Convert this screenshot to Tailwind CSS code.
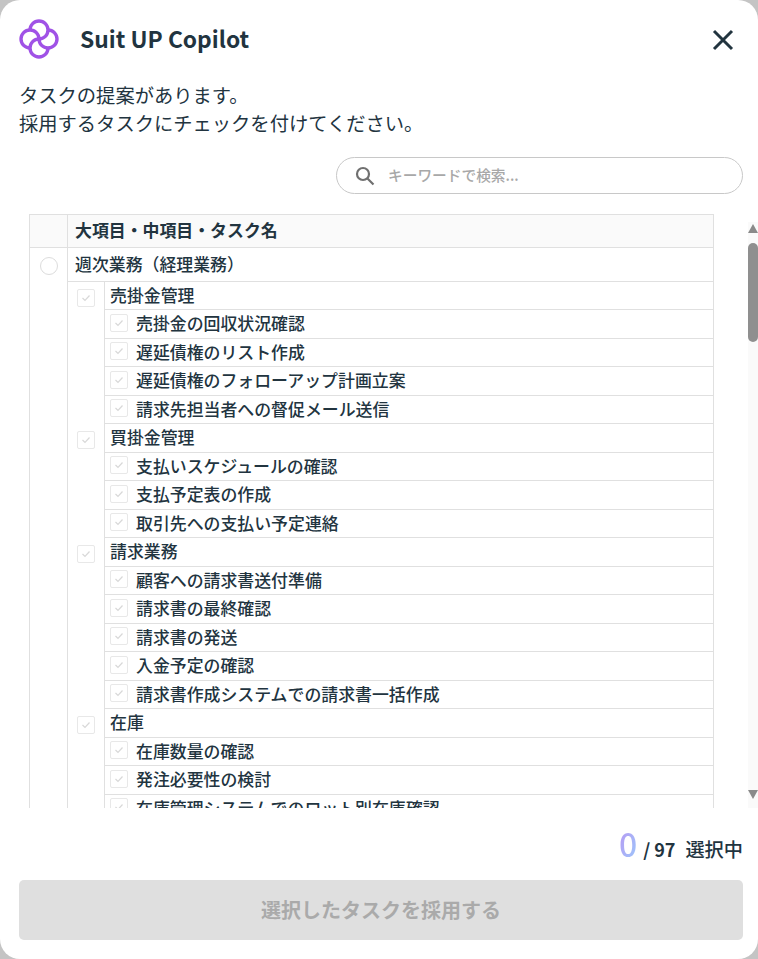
<!DOCTYPE html>
<html lang="ja"><head><meta charset="utf-8">
<script src="https://cdn.jsdelivr.net/npm/@tailwindcss/browser@4"></script>
</head>
<body class="bg-[#c4c4c4] overflow-hidden">
<div class="w-[758px] h-[959px] bg-white rounded-[20px] overflow-hidden flex flex-col pl-[19px] pr-[15px] text-[#22343f] font-['Noto_Sans_CJK_JP','Noto_Sans',sans-serif]">
  <header class="h-[78px] shrink-0 flex items-center justify-between">
    <div class="flex items-center gap-[21px]">
      <svg width="40" height="40" viewBox="0 0 40 40" fill="none" stroke="#a052e6" stroke-width="3.4">
        <path d="M11 11 A9 9 0 1 1 20 20"/>
        <path d="M29 11 A9 9 0 1 1 20 20"/>
        <path d="M29 29 A9 9 0 1 1 20 20"/>
        <path d="M11 29 A9 9 0 1 1 20 20"/>
      </svg>
      <h1 class="text-[22.8px] font-bold">Suit UP Copilot</h1>
    </div>
    <svg class="mr-[9px] mt-[1px]" width="22" height="22" viewBox="0 0 22 22" fill="none" stroke="#22343f" stroke-width="3"><path d="M2 2 L20 20 M20 2 L2 20"/></svg>
  </header>
  <p class="text-[19.3px] leading-[28px] h-[56px] mt-[3px] shrink-0">タスクの提案があります。<br>採用するタスクにチェックを付けてください。</p>
  <div class="flex justify-end mt-[20px] shrink-0">
    <div class="w-[407px] h-[37px] border border-[#c8c8c8] rounded-full flex items-center pl-[18px] gap-[13px]">
      <svg width="20" height="20" viewBox="0 0 20 20" fill="none" stroke="#707070" stroke-width="2.2"><circle cx="8" cy="8" r="6"/><path d="M12.5 12.5 L18.5 18.5"/></svg>
      <span class="text-[14.7px] font-medium text-[#a8a8a8]">キーワードで検索...</span>
    </div>
  </div>
  <div class="mt-[20px] h-[594px] shrink-0 flex -mr-[15px] overflow-hidden">
    <div class="ml-[10px] w-[685px] shrink-0 border-x border-t border-[#e0e0e0] text-[16.9px] font-medium self-start">
      <div class="flex h-[33px] bg-[#fafafa] border-b border-[#e0e0e0]">
        <div class="w-[38px] border-r border-[#e0e0e0]"></div>
        <div class="flex items-center pl-[7px] pb-[2px] font-bold">大項目・中項目・タスク名</div>
      </div>
      <div class="flex">
        <div class="w-[38px] shrink-0 border-r border-[#e0e0e0] pt-[9px] flex justify-center">
          <span class="block w-[18px] h-[18px] rounded-full border border-[#dcdcdc]"></span>
        </div>
        <div class="flex-1 min-w-0">
          <div class="h-[34px] flex items-center pl-[7px] pb-[2px] border-b border-[#e0e0e0]">週次業務（経理業務）</div>
          <!-- 売掛金管理 -->
          <div class="flex">
            <div class="w-[37px] shrink-0 border-r border-[#e0e0e0] pt-[7px] pr-[1px] flex justify-center"><span class="flex items-center justify-center w-[18px] h-[18px] rounded-[2px] border border-[#e8e8e8]"><svg width="12" height="12" viewBox="0 0 12 12" fill="none" stroke="#d8d8d8" stroke-width="1.2"><path d="M2.5 6 L5 8.5 L9.5 3.5"/></svg></span></div>
            <div class="flex-1 min-w-0">
              <div class="h-[28px] flex items-center pl-[5px] pb-[2px] border-b border-[#e0e0e0]">売掛金管理</div>
              <div class="h-[28.5px] flex items-center pl-[5px] pb-[2px] gap-[8px] border-b border-[#e0e0e0]"><span class="flex items-center justify-center w-[18px] h-[18px] rounded-[2px] border border-[#e8e8e8]"><svg width="12" height="12" viewBox="0 0 12 12" fill="none" stroke="#d8d8d8" stroke-width="1.2"><path d="M2.5 6 L5 8.5 L9.5 3.5"/></svg></span>売掛金の回収状況確認</div>
              <div class="h-[28.5px] flex items-center pl-[5px] pb-[2px] gap-[8px] border-b border-[#e0e0e0]"><span class="flex items-center justify-center w-[18px] h-[18px] rounded-[2px] border border-[#e8e8e8]"><svg width="12" height="12" viewBox="0 0 12 12" fill="none" stroke="#d8d8d8" stroke-width="1.2"><path d="M2.5 6 L5 8.5 L9.5 3.5"/></svg></span>遅延債権のリスト作成</div>
              <div class="h-[28.5px] flex items-center pl-[5px] pb-[2px] gap-[8px] border-b border-[#e0e0e0]"><span class="flex items-center justify-center w-[18px] h-[18px] rounded-[2px] border border-[#e8e8e8]"><svg width="12" height="12" viewBox="0 0 12 12" fill="none" stroke="#d8d8d8" stroke-width="1.2"><path d="M2.5 6 L5 8.5 L9.5 3.5"/></svg></span>遅延債権のフォローアップ計画立案</div>
              <div class="h-[28.5px] flex items-center pl-[5px] pb-[2px] gap-[8px] border-b border-[#e0e0e0]"><span class="flex items-center justify-center w-[18px] h-[18px] rounded-[2px] border border-[#e8e8e8]"><svg width="12" height="12" viewBox="0 0 12 12" fill="none" stroke="#d8d8d8" stroke-width="1.2"><path d="M2.5 6 L5 8.5 L9.5 3.5"/></svg></span>請求先担当者への督促メール送信</div>
            </div>
          </div>
          <!-- 買掛金管理 -->
          <div class="flex">
            <div class="w-[37px] shrink-0 border-r border-[#e0e0e0] pt-[7px] pr-[1px] flex justify-center"><span class="flex items-center justify-center w-[18px] h-[18px] rounded-[2px] border border-[#e8e8e8]"><svg width="12" height="12" viewBox="0 0 12 12" fill="none" stroke="#d8d8d8" stroke-width="1.2"><path d="M2.5 6 L5 8.5 L9.5 3.5"/></svg></span></div>
            <div class="flex-1 min-w-0">
              <div class="h-[28.5px] flex items-center pl-[5px] pb-[2px] border-b border-[#e0e0e0]">買掛金管理</div>
              <div class="h-[28.5px] flex items-center pl-[5px] pb-[2px] gap-[8px] border-b border-[#e0e0e0]"><span class="flex items-center justify-center w-[18px] h-[18px] rounded-[2px] border border-[#e8e8e8]"><svg width="12" height="12" viewBox="0 0 12 12" fill="none" stroke="#d8d8d8" stroke-width="1.2"><path d="M2.5 6 L5 8.5 L9.5 3.5"/></svg></span>支払いスケジュールの確認</div>
              <div class="h-[28.5px] flex items-center pl-[5px] pb-[2px] gap-[8px] border-b border-[#e0e0e0]"><span class="flex items-center justify-center w-[18px] h-[18px] rounded-[2px] border border-[#e8e8e8]"><svg width="12" height="12" viewBox="0 0 12 12" fill="none" stroke="#d8d8d8" stroke-width="1.2"><path d="M2.5 6 L5 8.5 L9.5 3.5"/></svg></span>支払予定表の作成</div>
              <div class="h-[28.5px] flex items-center pl-[5px] pb-[2px] gap-[8px] border-b border-[#e0e0e0]"><span class="flex items-center justify-center w-[18px] h-[18px] rounded-[2px] border border-[#e8e8e8]"><svg width="12" height="12" viewBox="0 0 12 12" fill="none" stroke="#d8d8d8" stroke-width="1.2"><path d="M2.5 6 L5 8.5 L9.5 3.5"/></svg></span>取引先への支払い予定連絡</div>
            </div>
          </div>
          <!-- 請求業務 -->
          <div class="flex">
            <div class="w-[37px] shrink-0 border-r border-[#e0e0e0] pt-[7px] pr-[1px] flex justify-center"><span class="flex items-center justify-center w-[18px] h-[18px] rounded-[2px] border border-[#e8e8e8]"><svg width="12" height="12" viewBox="0 0 12 12" fill="none" stroke="#d8d8d8" stroke-width="1.2"><path d="M2.5 6 L5 8.5 L9.5 3.5"/></svg></span></div>
            <div class="flex-1 min-w-0">
              <div class="h-[28.5px] flex items-center pl-[5px] pb-[2px] border-b border-[#e0e0e0]">請求業務</div>
              <div class="h-[28.5px] flex items-center pl-[5px] pb-[2px] gap-[8px] border-b border-[#e0e0e0]"><span class="flex items-center justify-center w-[18px] h-[18px] rounded-[2px] border border-[#e8e8e8]"><svg width="12" height="12" viewBox="0 0 12 12" fill="none" stroke="#d8d8d8" stroke-width="1.2"><path d="M2.5 6 L5 8.5 L9.5 3.5"/></svg></span>顧客への請求書送付準備</div>
              <div class="h-[28.5px] flex items-center pl-[5px] pb-[2px] gap-[8px] border-b border-[#e0e0e0]"><span class="flex items-center justify-center w-[18px] h-[18px] rounded-[2px] border border-[#e8e8e8]"><svg width="12" height="12" viewBox="0 0 12 12" fill="none" stroke="#d8d8d8" stroke-width="1.2"><path d="M2.5 6 L5 8.5 L9.5 3.5"/></svg></span>請求書の最終確認</div>
              <div class="h-[28.5px] flex items-center pl-[5px] pb-[2px] gap-[8px] border-b border-[#e0e0e0]"><span class="flex items-center justify-center w-[18px] h-[18px] rounded-[2px] border border-[#e8e8e8]"><svg width="12" height="12" viewBox="0 0 12 12" fill="none" stroke="#d8d8d8" stroke-width="1.2"><path d="M2.5 6 L5 8.5 L9.5 3.5"/></svg></span>請求書の発送</div>
              <div class="h-[28.5px] flex items-center pl-[5px] pb-[2px] gap-[8px] border-b border-[#e0e0e0]"><span class="flex items-center justify-center w-[18px] h-[18px] rounded-[2px] border border-[#e8e8e8]"><svg width="12" height="12" viewBox="0 0 12 12" fill="none" stroke="#d8d8d8" stroke-width="1.2"><path d="M2.5 6 L5 8.5 L9.5 3.5"/></svg></span>入金予定の確認</div>
              <div class="h-[28.5px] flex items-center pl-[5px] pb-[2px] gap-[8px] border-b border-[#e0e0e0]"><span class="flex items-center justify-center w-[18px] h-[18px] rounded-[2px] border border-[#e8e8e8]"><svg width="12" height="12" viewBox="0 0 12 12" fill="none" stroke="#d8d8d8" stroke-width="1.2"><path d="M2.5 6 L5 8.5 L9.5 3.5"/></svg></span>請求書作成システムでの請求書一括作成</div>
            </div>
          </div>
          <!-- 在庫 -->
          <div class="flex">
            <div class="w-[37px] shrink-0 border-r border-[#e0e0e0] pt-[7px] pr-[1px] flex justify-center"><span class="flex items-center justify-center w-[18px] h-[18px] rounded-[2px] border border-[#e8e8e8]"><svg width="12" height="12" viewBox="0 0 12 12" fill="none" stroke="#d8d8d8" stroke-width="1.2"><path d="M2.5 6 L5 8.5 L9.5 3.5"/></svg></span></div>
            <div class="flex-1 min-w-0">
              <div class="h-[28.5px] flex items-center pl-[5px] pb-[2px] border-b border-[#e0e0e0]">在庫</div>
              <div class="h-[28.5px] flex items-center pl-[5px] pb-[2px] gap-[8px] border-b border-[#e0e0e0]"><span class="flex items-center justify-center w-[18px] h-[18px] rounded-[2px] border border-[#e8e8e8]"><svg width="12" height="12" viewBox="0 0 12 12" fill="none" stroke="#d8d8d8" stroke-width="1.2"><path d="M2.5 6 L5 8.5 L9.5 3.5"/></svg></span>在庫数量の確認</div>
              <div class="h-[28.5px] flex items-center pl-[5px] pb-[2px] gap-[8px] border-b border-[#e0e0e0]"><span class="flex items-center justify-center w-[18px] h-[18px] rounded-[2px] border border-[#e8e8e8]"><svg width="12" height="12" viewBox="0 0 12 12" fill="none" stroke="#d8d8d8" stroke-width="1.2"><path d="M2.5 6 L5 8.5 L9.5 3.5"/></svg></span>発注必要性の検討</div>
              <div class="h-[28.5px] flex items-center pl-[5px] pb-[2px] gap-[8px] border-b border-[#e0e0e0]"><span class="flex items-center justify-center w-[18px] h-[18px] rounded-[2px] border border-[#e8e8e8]"><svg width="12" height="12" viewBox="0 0 12 12" fill="none" stroke="#d8d8d8" stroke-width="1.2"><path d="M2.5 6 L5 8.5 L9.5 3.5"/></svg></span>在庫管理システムでのロット別在庫確認</div>
            </div>
          </div>
        </div>
      </div>
    </div>
    <div class="ml-auto mt-[8px] w-[10px] bg-[#fafafa] flex flex-col">
      <svg class="mt-[2px]" width="10" height="9" viewBox="0 0 10 9"><path d="M0 9 L5 0 L10 9Z" fill="#8a8a8a"/></svg>
      <div class="mt-[10px] w-[10px] h-[99px] bg-[#8f8f8f] rounded-[5px]"></div>
      <svg class="mt-auto mb-[9px]" width="10" height="9" viewBox="0 0 10 9"><path d="M0 0 L5 9 L10 0Z" fill="#8a8a8a"/></svg>
    </div>
  </div>
  <div class="h-[72px] shrink-0 flex items-end justify-end pb-[18px] font-medium">
    <span class="text-[32px] leading-[38px] bg-gradient-to-br from-[#b894f2] to-[#98c8fb] bg-clip-text text-transparent">0</span>
    <span class="text-[18px] leading-[24px] ml-[6px] mb-[1px] font-bold">/ 97</span>
    <span class="text-[19.2px] leading-[24px] ml-[10px] mb-[1px]">選択中</span>
  </div>
  <button class="h-[60px] shrink-0 rounded-[5px] bg-[#dfdfdf] text-[#aaaaaa] text-[20px] font-bold">選択したタスクを採用する</button>
</div>
</body></html>
